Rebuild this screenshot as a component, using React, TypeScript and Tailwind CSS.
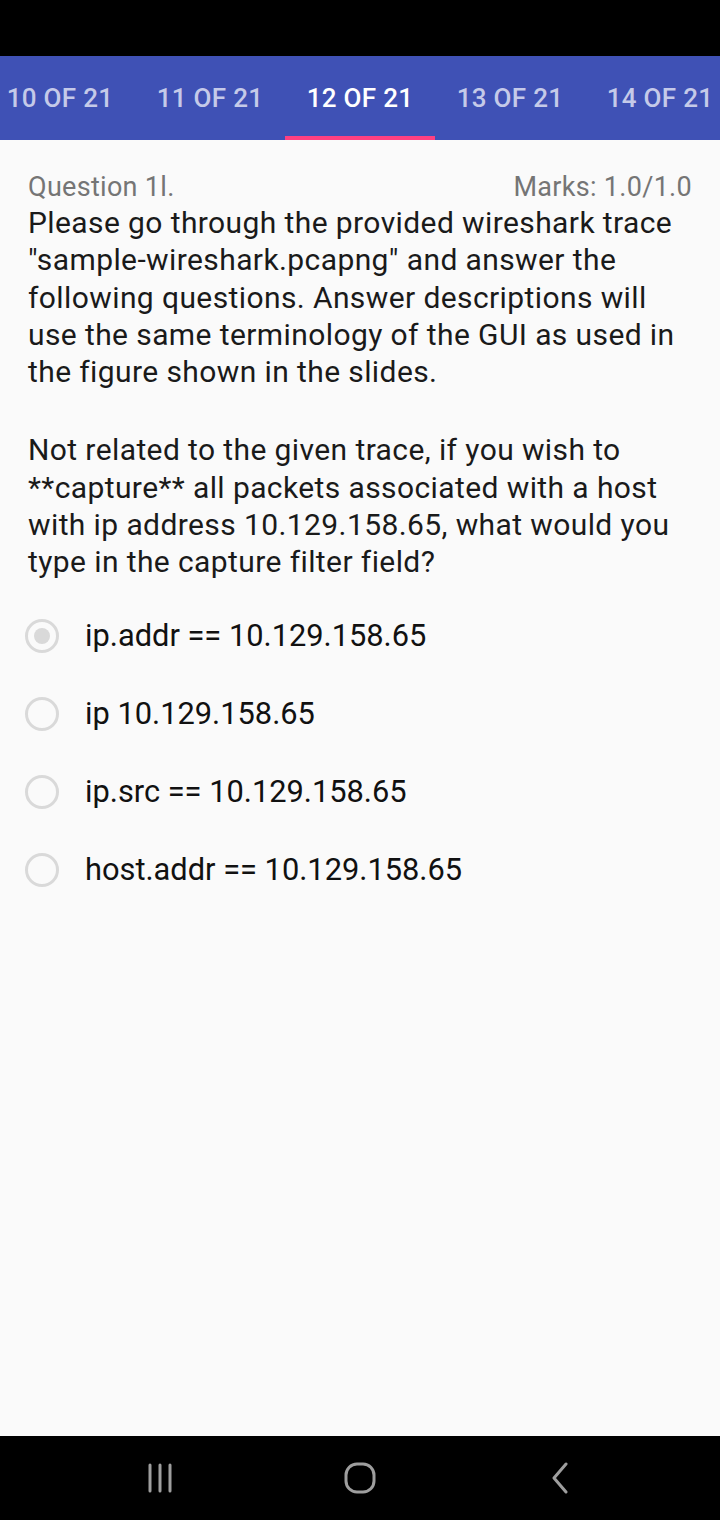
import { useState } from "react";

const TABS = ["10 OF 21", "11 OF 21", "12 OF 21", "13 OF 21", "14 OF 21"];

const OPTIONS = [
  "ip.addr == 10.129.158.65",
  "ip 10.129.158.65",
  "ip.src == 10.129.158.65",
  "host.addr == 10.129.158.65",
];

export default function App() {
  const [selected, setSelected] = useState(0);

  return (
    <div
      className="w-[720px] h-[1520px] flex flex-col bg-[#fafafa]"
      style={{ fontFamily: "Roboto, 'Noto Sans', sans-serif" }}
    >
      {/* Status bar */}
      <div className="h-[56px] bg-black" />

      {/* Tabs */}
      <div className="h-[84px] bg-[#3f51b5] flex justify-center overflow-hidden">
        <div className="flex shrink-0">
          {TABS.map((t, i) => (
            <div
              key={t}
              className="w-[150px] shrink-0 flex flex-col items-center justify-center relative"
            >
              <span
                className={`text-[26px] font-medium tracking-[0.3px] ${
                  i === 2 ? "text-white" : "text-[#c5cae9]"
                }`}
              >
                {t}
              </span>
              {i === 2 && (
                <div className="absolute bottom-0 left-0 right-0 h-[4px] bg-[#ff4081]" />
              )}
            </div>
          ))}
        </div>
      </div>

      {/* Content */}
      <div className="flex-1 px-[28px] pt-[30px]">
        <div className="flex justify-between items-baseline text-[27px] leading-[34px] tracking-[0.3px] text-[#757575]">
          <span>Question 1l.</span>
          <span>Marks: 1.0/1.0</span>
        </div>
        <p className="text-[30px] leading-[37.3px] tracking-[0.4px] text-[#1a1a1a]">
          Please go through the provided wireshark trace
          "sample-wireshark.pcapng" and answer the following questions. Answer
          descriptions will use the same terminology of the GUI as used in the
          figure shown in the slides.
        </p>
        <p className="mt-[41px] text-[30px] leading-[37.3px] tracking-[0.4px] text-[#1a1a1a]">
          Not related to the given trace, if you wish to **capture** all packets
          associated with a host with ip address 10.129.158.65, what would you
          type in the capture filter field?
        </p>

        <div className="mt-[16px] -ml-[3px] flex flex-col">
          {OPTIONS.map((o, i) => (
            <button
              key={o}
              onClick={() => setSelected(i)}
              className="h-[78px] flex items-center text-left"
            >
              <span className="w-[34px] h-[34px] rounded-full border-[3px] border-[#d9d9d9] flex items-center justify-center shrink-0">
                {selected === i && (
                  <span className="w-[16px] h-[16px] rounded-full bg-[#d9d9d9]" />
                )}
              </span>
              <span className="ml-[26px] text-[30.8px] text-[#111]">{o}</span>
            </button>
          ))}
        </div>
      </div>

      {/* Navigation bar */}
      <div className="h-[84px] bg-black flex items-center justify-center">
        <div className="w-[200px] flex justify-center">
          <svg width="28" height="30" viewBox="0 0 28 30" fill="none">
            <g stroke="#9e9e9e" strokeWidth="3" strokeLinecap="round">
              <line x1="4" y1="2" x2="4" y2="28" />
              <line x1="14" y1="2" x2="14" y2="28" />
              <line x1="24" y1="2" x2="24" y2="28" />
            </g>
          </svg>
        </div>
        <div className="w-[200px] flex justify-center">
          <svg width="32" height="32" viewBox="0 0 32 32" fill="none">
            <rect x="2" y="2" width="28" height="28" rx="11" stroke="#9e9e9e" strokeWidth="3" />
          </svg>
        </div>
        <div className="w-[200px] flex justify-center">
          <svg width="20" height="32" viewBox="0 0 20 32" fill="none">
            <path d="M16 2 L4 16 L16 30" stroke="#9e9e9e" strokeWidth="3" strokeLinecap="round" strokeLinejoin="round" />
          </svg>
        </div>
      </div>
    </div>
  );
}
